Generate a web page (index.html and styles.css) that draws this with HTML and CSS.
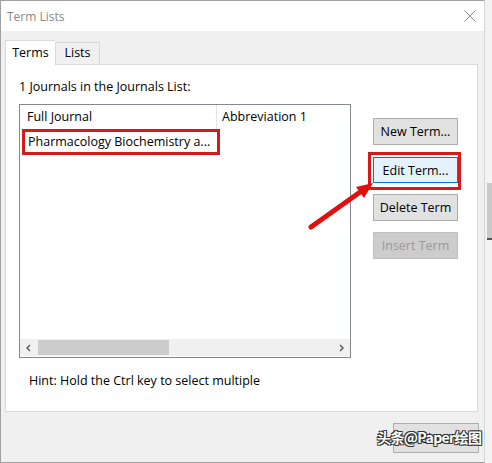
FILE: index.html
```html
<!DOCTYPE html>
<html>
<head>
<meta charset="utf-8">
<link rel="stylesheet" href="styles.css">
</head>
<body>
<div class="screen">
  <div class="win">
    <div class="titlebar">
      <span class="title">Term Lists</span>
      <svg class="xbtn" width="12" height="12" viewBox="0 0 12 12"><path d="M0.5 0.5L11.5 11.5M11.5 0.5L0.5 11.5" stroke="#8a8a8a" stroke-width="1" fill="none"/></svg>
    </div>
    <div class="client">
      <div class="tabs">
        <div class="tab active">Terms</div>
        <div class="tab">Lists</div>
      </div>
      <div class="panel">
        <div class="leftcol">
          <div class="label">1 Journals in the Journals List:</div>
          <div class="listbox">
            <div class="header">
              <div class="col c1">Full Journal</div>
              <div class="col c2">Abbreviation 1</div>
            </div>
            <div class="row"><span class="hl">Pharmacology Biochemistry a...</span></div>
            <div class="spacer"></div>
            <div class="hscroll">
              <svg class="arr" width="16" height="16" viewBox="0 0 16 16"><path d="M9.5 5L6.5 8L9.5 11" stroke="#606060" stroke-width="1.5" fill="none"/></svg>
              <div class="track"><div class="thumb"></div></div>
              <svg class="arr" width="16" height="16" viewBox="0 0 16 16"><path d="M6.5 5L9.5 8L6.5 11" stroke="#606060" stroke-width="1.5" fill="none"/></svg>
            </div>
          </div>
          <div class="hint">Hint: Hold the Ctrl key to select multiple</div>
        </div>
        <div class="btncol">
          <button class="btn">New Term...</button>
          <button class="btn focus">Edit Term...</button>
          <button class="btn">Delete Term</button>
          <button class="btn disabled">Insert Term</button>
        </div>
      </div>
      <div class="footer">
        <button class="btn close">Close</button>
      </div>
    </div>
    <div class="redbox"></div>
    <svg class="arrow" width="492" height="463" viewBox="0 0 492 463">
      <line x1="311" y1="227" x2="363" y2="190" stroke="#e01010" stroke-width="5" stroke-linecap="round"/>
      <polygon points="373,183 356,187 364,198" fill="#e01010"/>
    </svg>
    <div class="watermark">头条@Paper绘图</div>
  </div>
  <div class="side">
    <div class="sidebar"></div>
  </div>
</div>
</body>
</html>
```

FILE: styles.css
```css
* { box-sizing: border-box; }
html, body { margin: 0; padding: 0; }
body {
  width: 492px; height: 463px; overflow: hidden;
  background: #f2f2f2;
  font-family: "Open Sans", "Noto Sans", sans-serif;
  font-size: 12.5px;
  color: #000;
}
.screen { display: flex; width: 492px; height: 463px; }
.win {
  position: relative;
  width: 485px; height: 463px;
  border: 1px solid #a0a0a0;
  border-right-color: #d6d6d6;
  background: #f0f0f0;
  display: flex; flex-direction: column;
}
.titlebar {
  height: 30px; background: #fff;
  display: flex; align-items: center; justify-content: space-between;
  padding: 0 8px 0 6px;
}
.title { color: #888; font-size: 12px; }
.client { flex: 1; display: flex; flex-direction: column; padding: 9px 6px 0 4px; }
.tabs { display: flex; align-items: flex-end; height: 24px; position: relative; z-index: 1; }
.tab {
  height: 22px; line-height: 20px;
  border: 1px solid #d9d9d9; border-bottom: none;
  background: #f0f0f0;
  width: 45px; text-align: center;
}
.tab.active {
  width: 50px; height: 25px; margin-bottom: -1px;
  background: #fff; line-height: 24px;
  border-right: none;
}
.panel {
  height: 348px;
  background: #fff; border: 1px solid #d9d9d9;
  display: flex; padding: 14px 0 0 13px;
}
.leftcol { width: 332px; display: flex; flex-direction: column; }
.label { height: 16px; line-height: 16px; }
.listbox {
  margin-top: 9px; height: 254px;
  border: 1px solid #828790;
  display: flex; flex-direction: column;
}
.header { display: flex; height: 24px; }
.col { line-height: 24px; padding-left: 7px; white-space: nowrap; }
.c1 { width: 197px; border-right: 1px solid #e5e5e5; }
.c2 { flex: 1; padding-left: 5px; }
.row { height: 26px; padding-left: 2px; }
.hl {
  display: block; width: 198px; height: 26px;
  border: 3px solid #d41a1a;
  padding-left: 3px; line-height: 19px;
  white-space: nowrap; overflow: hidden;
}
.spacer { flex: 1; }
.hscroll { height: 17px; background: #f0f0f0; display: flex; align-items: center; margin-bottom: 1px; }
.arr { flex: none; width: 17px; }
.track { flex: 1; height: 17px; }
.thumb { margin-left: 1px; width: 131px; height: 15px; margin-top: 1px; background: #cdcdcd; }
.hint { margin-top: 15px; padding-left: 10px; height: 16px; line-height: 16px; white-space: nowrap; }
.btncol { margin-left: 22px; padding-top: 39px; display: flex; flex-direction: column; gap: 11px; }
.btn {
  width: 85px; height: 27px;
  font-family: inherit; font-size: 12.5px; color: #000;
  background: #e1e1e1; border: 1px solid #adadad;
  padding: 0; margin: 0; white-space: nowrap;
}
.btn.focus { background: #e5f1fb; border-color: #0078d7; height: 26px; margin-top: 1px; }
.btn.disabled { background: #cccccc; border-color: #bfbfbf; color: #9a9a9a; }
.footer { display: flex; justify-content: flex-end; padding: 11px 0 0 0; }
.btn.close { width: 86px; height: 30px; margin-right: -1px; }
.redbox {
  position: absolute; left: 367px; top: 151px; width: 93px; height: 38px;
  border: 3px solid #d41a1a;
}
.arrow { position: absolute; left: -1px; top: -1px; pointer-events: none; }
.watermark {
  position: absolute; left: 376px; top: 426px;
  white-space: nowrap;
  font-family: "Noto Sans CJK SC", sans-serif; font-size: 14px; font-weight: bold;
  line-height: 20px;
  color: #fff; letter-spacing: -0.6px;
  text-shadow: 1px 1px 0 #333, -1px -1px 0 #333, 1px -1px 0 #333, -1px 1px 0 #333;
}
.side { flex: 1; display: flex; flex-direction: column; padding-top: 183px; padding-left: 2px; background: #f3f3f3; }
.sidebar { height: 57px; background: #c9c9c9; border-bottom: 2px solid #555; }
```
